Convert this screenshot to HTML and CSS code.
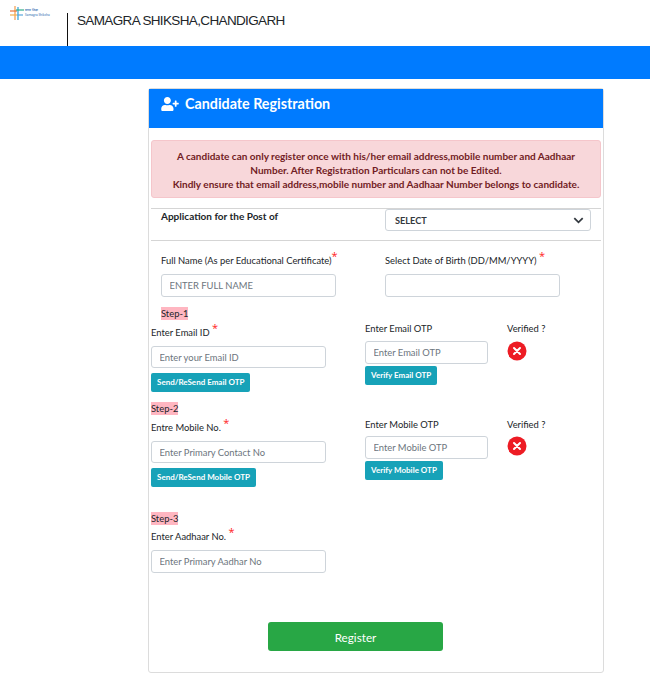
FILE: index.html
```html
<!DOCTYPE html>
<html lang="en">
<head>
<meta charset="utf-8">
<title>Candidate Registration</title>
<link rel="stylesheet" href="styles.css">
</head>
<body>
<header class="top">
  <div class="logo">
    <svg class="logo-mark" viewBox="0 0 14 14" width="14" height="14" aria-hidden="true">
      <path d="M5 0v14" stroke="#f39a4a" stroke-width="1.2"/>
      <path d="M8 1v13" stroke="#2f9fd8" stroke-width="1.2"/>
      <path d="M0 5h7" stroke="#e8743b" stroke-width="1.2"/>
      <path d="M6 4h8" stroke="#2fb08a" stroke-width="1.2"/>
      <path d="M0 9h7" stroke="#f2b04d" stroke-width="1.2"/>
      <path d="M7 9h6" stroke="#5aa7dc" stroke-width="1.2"/>
    </svg>
    <div class="logo-text"><span>समग्र शिक्षा</span><span>Samagra Shiksha</span></div>
  </div>
  <div class="divider"></div>
  <div class="site-title">SAMAGRA SHIKSHA,CHANDIGARH</div>
</header>
<div class="bluebar"></div>
<main class="card">
  <h1 class="card-head">
    <svg class="head-icon" viewBox="0 0 640 512" aria-hidden="true"><path fill="#fff" d="M624 208h-64v-64c0-8.800-7.200-16-16-16h-32c-8.800 0-16 7.200-16 16v64h-64c-8.800 0-16 7.200-16 16v32c0 8.800 7.200 16 16 16h64v64c0 8.800 7.200 16 16 16h32c8.800 0 16-7.200 16-16v-64h64c8.800 0 16-7.200 16-16v-32c0-8.800-7.200-16-16-16zm-400 48c70.700 0 128-57.300 128-128S294.700 0 224 0 96 57.300 96 128s57.300 128 128 128zm89.600 32h-16.700c-22.200 10.200-46.900 16-72.900 16s-50.600-5.800-72.900-16h-16.700C60.200 288 0 348.200 0 422.400V464c0 26.500 21.500 48 48 48h352c26.500 0 48-21.500 48-48v-41.600c0-74.200-60.200-134.400-134.400-134.400z"/></svg>
    Candidate Registration
  </h1>
  <div class="card-body">
    <div class="alert">A candidate can only register once with his/her email address,mobile number and Aadhaar Number. After Registration Particulars can not be Edited.<br>Kindly ensure that email address,mobile number and Aadhaar Number belongs to candidate.</div>
    <div class="post-row">
      <strong class="post-label">Application for the Post of</strong>
      <div class="select"><span>SELECT</span>
        <svg viewBox="0 0 12 8" width="11" height="7" aria-hidden="true"><path d="M1.200 1.200 6 6l4.800-4.800" fill="none" stroke="#343a40" stroke-width="2"/></svg>
      </div>
    </div>
    <div class="name-row">
      <div class="name-col">
        <label class="lbl">Full Name (As per Educational Certificate)<sup class="req">*</sup></label>
        <input class="field wide" placeholder="ENTER FULL NAME">
      </div>
      <div class="dob-col">
        <label class="lbl">Select Date of Birth (DD/MM/YYYY) <sup class="req">*</sup></label>
        <input class="field wide">
      </div>
    </div>
    <div class="step step-first"><mark>Step-1</mark></div>
    <div class="otp-row otp-row-first">
      <div class="col-a">
        <label class="lbl">Enter Email ID <sup class="req">*</sup></label>
        <input class="field wide" placeholder="Enter your Email ID">
        <button class="btn-info">Send/ReSend Email OTP</button>
      </div>
      <div class="col-b">
        <label class="lbl">Enter Email OTP</label>
        <input class="field narrow" placeholder="Enter Email OTP">
        <button class="btn-info">Verify Email OTP</button>
      </div>
      <div class="col-c">
        <span class="lbl">Verified ?</span>
        <svg class="x-icon" viewBox="0 0 20 20" aria-hidden="true"><circle cx="10" cy="10" r="9.500" fill="#ed1c24"/><path d="M7 7l6 6M13 7l-6 6" stroke="#fff" stroke-width="2" stroke-linecap="round"/></svg>
      </div>
    </div>
    <div class="step step-second"><mark>Step-2</mark></div>
    <div class="otp-row">
      <div class="col-a">
        <label class="lbl">Entre Mobile No. <sup class="req">*</sup></label>
        <input class="field wide" placeholder="Enter Primary Contact No">
        <button class="btn-info">Send/ReSend Mobile OTP</button>
      </div>
      <div class="col-b">
        <label class="lbl">Enter Mobile OTP</label>
        <input class="field narrow" placeholder="Enter Mobile OTP">
        <button class="btn-info">Verify Mobile OTP</button>
      </div>
      <div class="col-c">
        <span class="lbl">Verified ?</span>
        <svg class="x-icon" viewBox="0 0 20 20" aria-hidden="true"><circle cx="10" cy="10" r="9.500" fill="#ed1c24"/><path d="M7 7l6 6M13 7l-6 6" stroke="#fff" stroke-width="2" stroke-linecap="round"/></svg>
      </div>
    </div>
    <div class="step step-third"><mark>Step-3</mark></div>
    <div class="col-a aadhaar">
      <label class="lbl">Enter Aadhaar No. <sup class="req">*</sup></label>
      <input class="field wide" placeholder="Enter Primary Aadhar No">
    </div>
    <div class="actions"><button class="btn-register">Register</button></div>
  </div>
</main>
</body>
</html>
```
FILE: styles.css
```css
* { box-sizing: border-box; }
html, body { margin: 0; padding: 0; }
body { background: #fff; font-family: Lato, "Open Sans", sans-serif; color: #212529; font-size: 9.400px; line-height: 14px; height: 674px; overflow: hidden; }
.top { height: 46px; display: flex; align-items: flex-start; }
.logo { width: 67px; display: flex; padding: 6px 0 0 10px; gap: 1px; }
.logo-mark { display: block; }
.logo-text { display: flex; flex-direction: column; margin-top: 2px; font-family: "Open Sans", sans-serif; font-size: 3px; line-height: 5px; color: #5a8bc0; white-space: nowrap; font-weight: 600; }
.divider { width: 1px; height: 33px; margin-top: 13px; background: #111; }
.site-title { margin: 13px 0 0 9px; font-family: "Liberation Sans", Arial, sans-serif; font-size: 13.500px; line-height: 16px; letter-spacing: -0.64px; color: #212529; }
.bluebar { height: 33px; background: #007bff; }
.card { width: 456px; height: 585px; margin: 9px 0 0 148px; border: 1px solid #dcdcdc; border-radius: 3px; }
.card-head { margin: 0; height: 39px; background: #007bff; color: #fff; display: flex; align-items: center; padding: 0 0 10px 12px; gap: 6px; font-size: 14.300px; font-weight: 700; line-height: 20px; }
.head-icon { width: 18px; height: 14px; display: block; }
.card-body { padding: 12px 2px 0 2px; }
.alert { height: 58px; background: #f8d7da; border: 1px solid #f5c6cb; border-radius: 3px; color: #721c24; font-weight: 700; font-size: 10px; line-height: 14px; text-align: center; padding: 8px 16px 0; }
.post-row { margin-top: 10px; height: 33px; border-top: 1px solid #d5d5d5; border-bottom: 1px solid #d5d5d5; display: flex; align-items: flex-start; }
.post-label { margin: 0 0 0 10px; width: 224px; font-weight: 700; font-size: 10px; color: #212529; }
.select { width: 206px; height: 22px; padding: 1px 6px 0 9px; border: 1px solid #ced4da; border-radius: 3px; display: flex; align-items: center; justify-content: space-between; font-size: 9.200px; font-weight: 700; color: #343a40; }
.name-row { display: flex; margin-top: 13px; padding-left: 10px; }
.name-col { width: 224px; }
.dob-col { width: 206px; }
.lbl { display: block; height: 14px; font-size: 9.400px; line-height: 14px; white-space: nowrap; color: #212529; }
.req { color: #f22; font-family: "Open Sans", sans-serif; font-size: 11px; line-height: 0; }
.field { display: block; height: 23px; padding: 0 7.500px; border: 1px solid #ced4da; border-radius: 3px; font-family: inherit; font-size: 9.400px; background: #fff; color: #495057; outline: none; }
.field::placeholder { color: #6c757d; opacity: 1; }
.wide { width: 175px; margin-top: 6px; }
.narrow { width: 123px; margin-top: 4px; }
.otp-row .col-a .field { height: 22px; }
.step { height: 13px; line-height: 13px; font-size: 9.400px; }
.step mark { display: inline-block; height: 13px; line-height: 13px; background: #ffb6c1; color: #212529; }
.step-first { margin-top: 10px; padding-left: 10px; }
.step-second { margin-top: 10px; }
.step-third { margin-top: 25px; }
.otp-row { display: flex; }
.col-a { width: 214px; padding-top: 6px; }
.col-b { width: 142px; padding-top: 3px; }
.col-c { padding-top: 3px; }
.otp-row-first .col-b, .otp-row-first .col-c { padding-top: 2px; }
.otp-row-first .narrow { margin-top: 5px; }
.otp-row-first .x-icon { margin-top: 5px; }
.aadhaar { padding-top: 5px; }
.btn-info { display: block; height: 19px; margin-top: 5px; padding: 0 6px; background: #17a2b8; color: #fff; border: 0; border-radius: 2px; font-family: inherit; font-size: 8px; font-weight: 700; line-height: 19px; white-space: nowrap; }
.col-b .btn-info { margin-top: 2px; }
.x-icon { display: block; width: 20px; height: 20px; margin-top: 4px; }
.actions { margin-top: 49px; padding-left: 117px; }
.btn-register { display: block; width: 175px; height: 29px; background: #28a745; color: #fff; border: 0; border-radius: 3px; font-family: inherit; font-size: 11.700px; }
```
